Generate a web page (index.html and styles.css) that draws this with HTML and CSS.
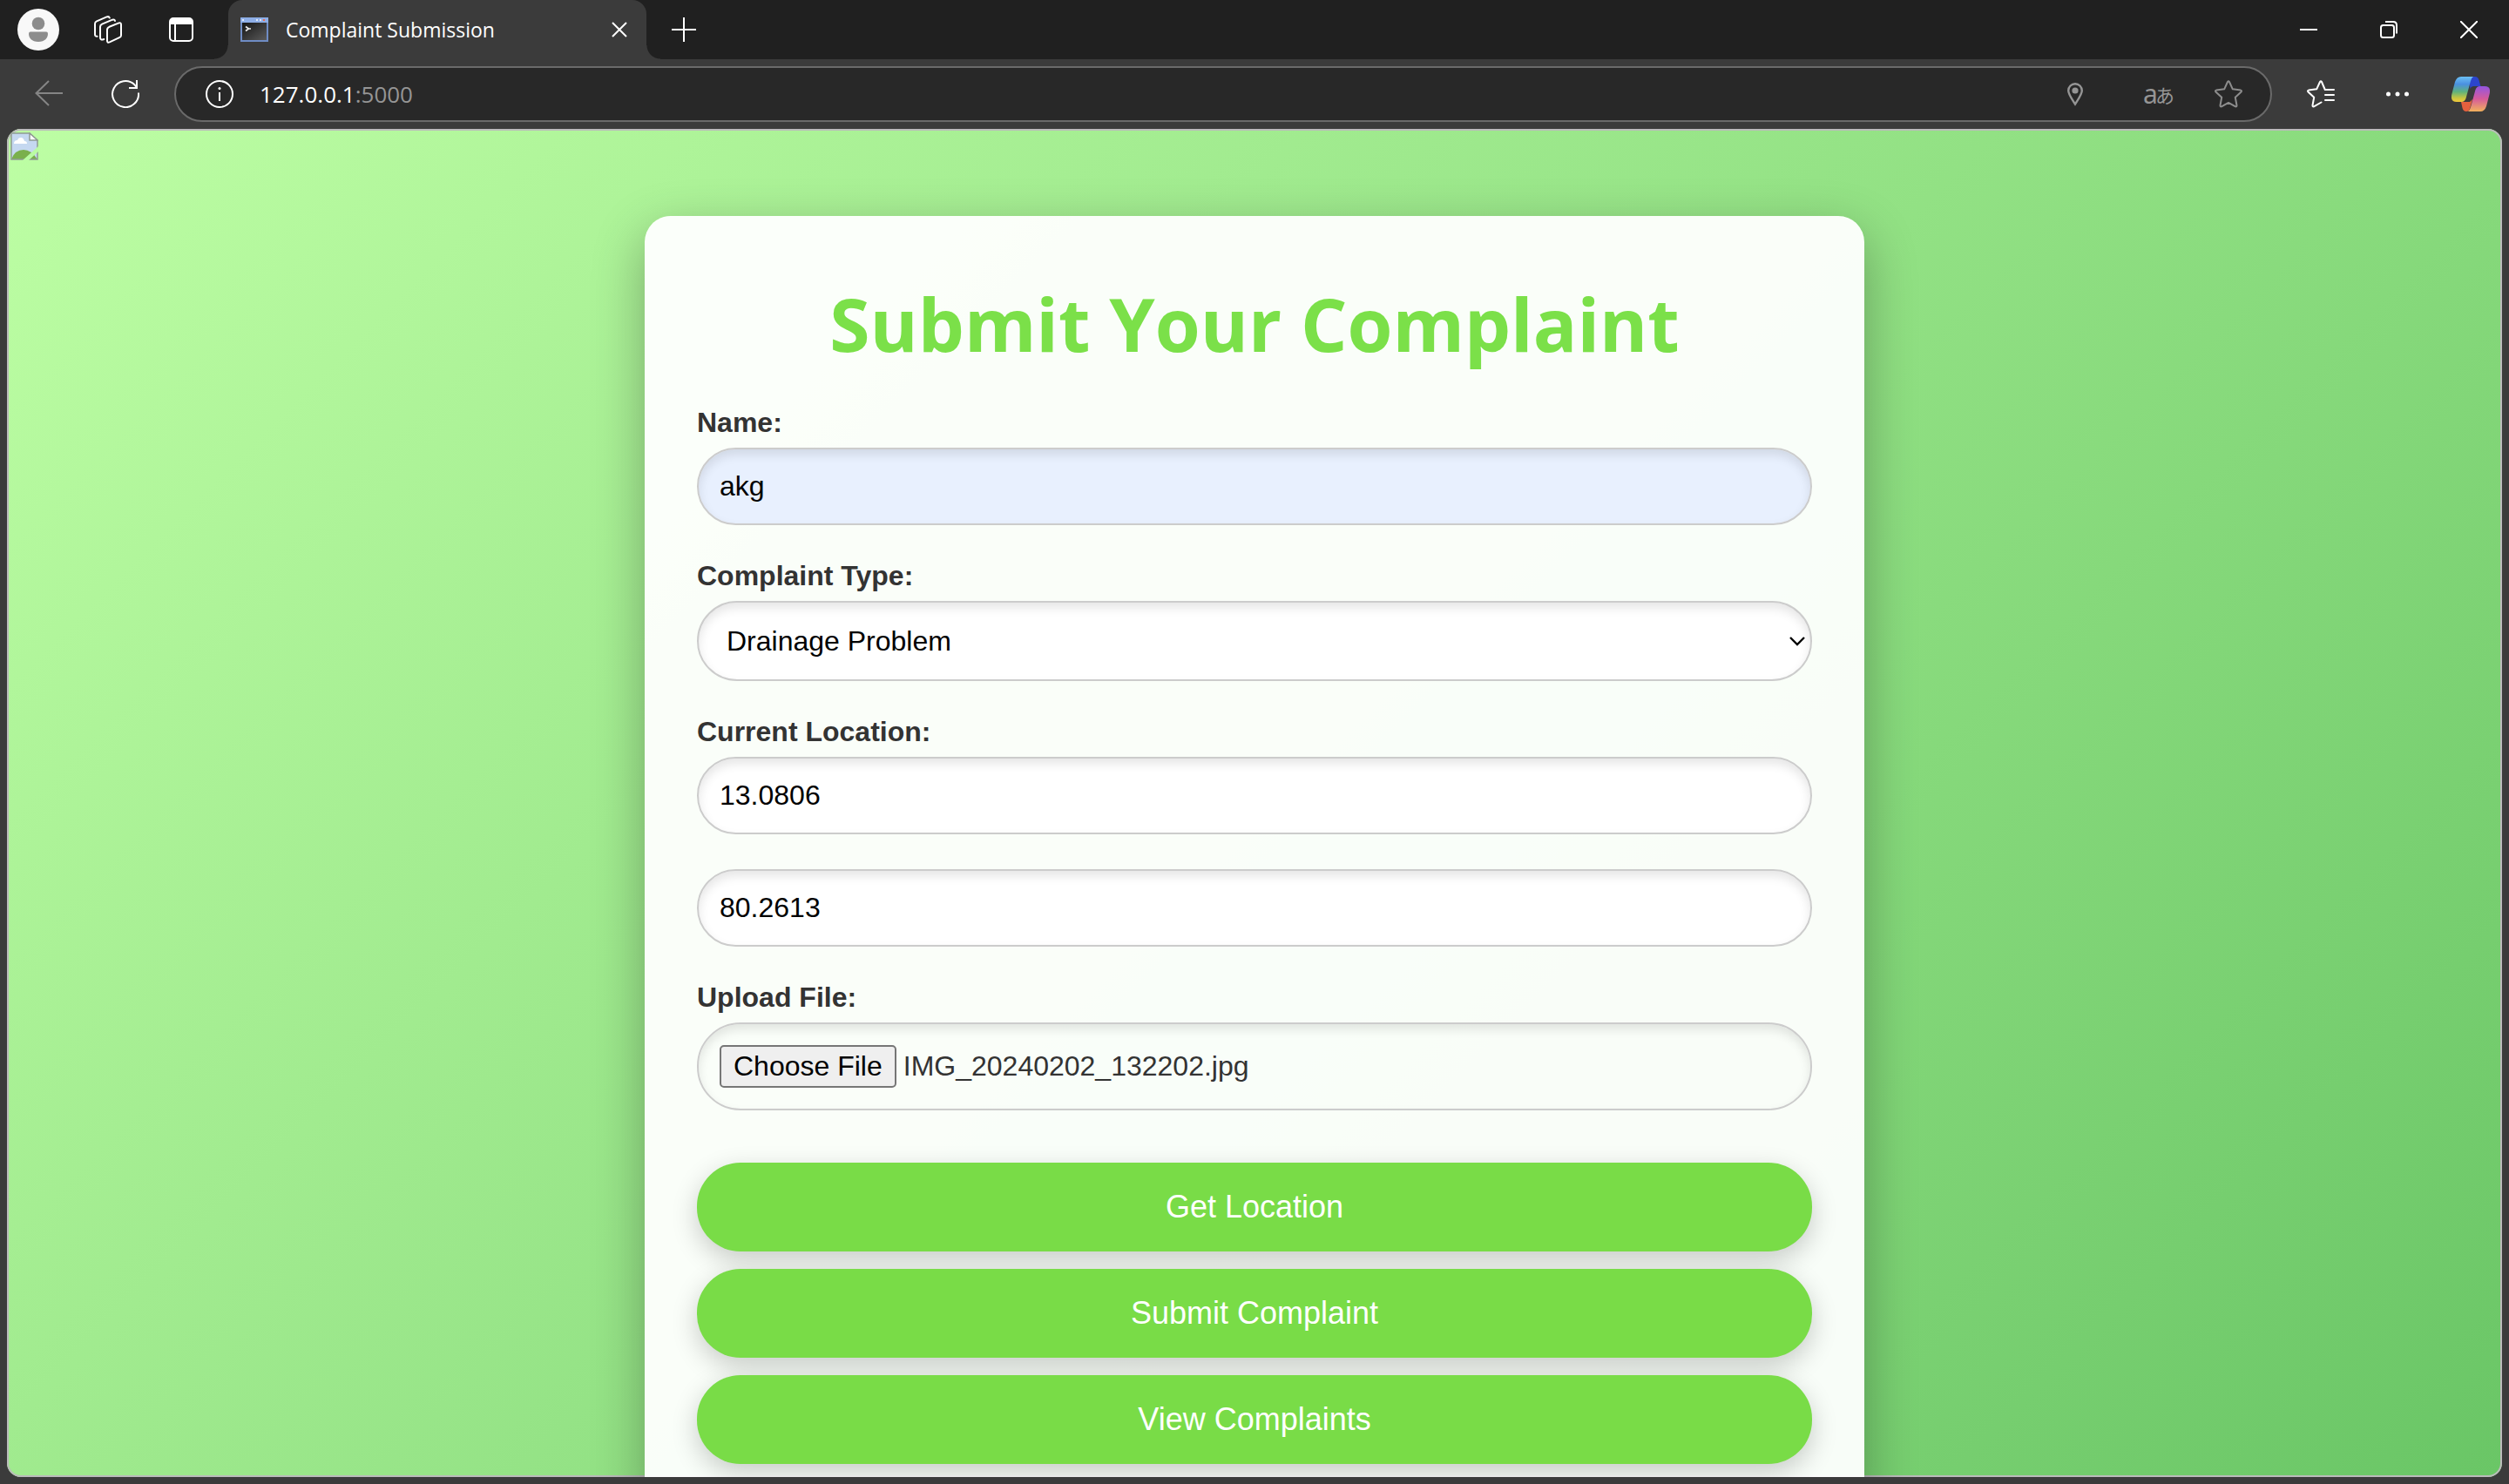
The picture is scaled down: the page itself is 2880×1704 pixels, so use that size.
FILE: index.html
```html
<!DOCTYPE html>
<html lang="en">
<head>
<meta charset="utf-8">
<title>Complaint Submission</title>
<link rel="stylesheet" href="styles.css">
</head>
<body>
<div class="browser">
  <header class="titlebar">
    <div class="titlebar-tools">
      <button class="icon-button" type="button" aria-label="Profile">
        <svg width="48" height="48" viewBox="0 0 48 48"><circle cx="24" cy="24" r="24" fill="#f8f8f8"/><circle cx="24" cy="17" r="7.3" fill="#8c8c8c"/><path d="M15 26.600h18q2 0 2 2.200c0 5-3.500 9.200-11 9.200s-11-4.200-11-9.200q0-2.200 2-2.200z" fill="#8c8c8c"/></svg>
      </button>
      <button class="icon-button" type="button" aria-label="Workspaces">
        <svg width="32" height="32" viewBox="0 0 32 32" fill="none" stroke="#fff" stroke-width="2" stroke-linecap="round" stroke-linejoin="round"><path d="M17.500 12.800 28.500 8.400Q31 7.600 31 10.200V22.500Q31 24.200 29.500 24.900L17.800 30.400Q15 31.500 15 28.800V16.200Q15 13.900 17.500 12.800z"/><path d="M11.300 27Q7 28.800 7 25V12.800Q7 10.500 9.200 9.600L21 4.700Q23.500 4 24 6"/><path d="M3.600 23.800Q1 24 1 21.500V9.300Q1 7.200 3 6.300L14.500 1.400Q17 .5 17.800 2.500"/></svg>
      </button>
      <button class="icon-button" type="button" aria-label="Tab actions">
        <svg width="28" height="28" viewBox="0 0 28 28"><rect x="1" y="1" width="26" height="26" rx="4" fill="none" stroke="#fff" stroke-width="2"/><path d="M1 8V5q0-4 4-4h18q4 0 4 4v3z" fill="#fff"/><path d="M7 8v19" stroke="#fff" stroke-width="2"/></svg>
      </button>
    </div>
    <div class="tab">
      <svg width="32" height="28" viewBox="0 0 32 28"><defs><linearGradient id="term" x1="0" y1="0" x2="1" y2="1"><stop offset="0" stop-color="#151515"/><stop offset="1" stop-color="#5a5a5a"/></linearGradient></defs><path fill="#6f8cc4" d="M0 0h32v28H0z"/><path fill="#8eaee6" d="M0 0h32v6H0z"/><path fill="url(#term)" d="M2 6h28v20H2z"/><path fill="#dfe8f8" d="M2 2h2v2H2zM18 2h2v2h-2zM22 2h2v2h-2z"/><path fill="#e86a50" d="M26 2h2v2h-2z"/><path d="M6 10.500 9.500 13 6 15.500M9 13h3" stroke="#eee" stroke-width="1.600" fill="none"/></svg>
      <span class="tab-title">Complaint Submission</span>
      <button class="icon-button" type="button" aria-label="Close tab">
        <svg width="18" height="18" viewBox="0 0 18 18" stroke="#fff" stroke-width="2"><path d="m1 1 16 16M17 1 1 17"/></svg>
      </button>
    </div>
    <button class="icon-button new-tab" type="button" aria-label="New tab">
      <svg width="28" height="28" viewBox="0 0 28 28" stroke="#fff" stroke-width="2"><path d="M14 0v28M0 14h28"/></svg>
    </button>
    <div class="window-controls">
      <button class="icon-button" type="button" aria-label="Minimize">
        <svg width="20" height="20" viewBox="0 0 20 20"><path d="M0 10h20" stroke="#fff" stroke-width="2"/></svg>
      </button>
      <button class="icon-button" type="button" aria-label="Restore">
        <svg width="20" height="20" viewBox="0 0 20 20" fill="none" stroke="#fff" stroke-width="2"><rect x="1" y="5" width="15" height="14" rx="2.500"/><path d="M6 1h9q4 0 4 4v9.500"/></svg>
      </button>
      <button class="icon-button" type="button" aria-label="Close window">
        <svg width="20" height="20" viewBox="0 0 20 20" stroke="#fff" stroke-width="2"><path d="m0 0 20 20M20 0 0 20"/></svg>
      </button>
    </div>
  </header>

  <nav class="toolbar">
    <button class="icon-button" type="button" aria-label="Back">
      <svg width="32" height="32" viewBox="0 0 32 32" fill="none" stroke="#858585" stroke-width="2"><path d="M32 15H1.500M16 1 1.500 15 16 29"/></svg>
    </button>
    <button class="icon-button" type="button" aria-label="Refresh">
      <svg width="32" height="32" viewBox="0 0 32 32" fill="none" stroke="#fff" stroke-width="2"><path d="M31 14.500A15 15 0 1 1 26.500 5.300L29 8.500"/><path d="M29 0v9H20"/></svg>
    </button>
    <div class="address">
      <svg width="32" height="32" viewBox="0 0 32 32" fill="none" stroke="#fff" stroke-width="2"><circle cx="16" cy="16" r="15"/><path d="M16 14v10"/><circle cx="16" cy="9.500" r="1.500" fill="#fff" stroke="none"/></svg>
      <a class="url" href="#">127.0.0.1<span class="url-port">:5000</span></a>
      <button class="icon-button location" type="button" aria-label="Location">
        <svg width="20" height="28" viewBox="0 0 20 28"><path d="M10 2.200a7.800 7.800 0 0 1 7.800 7.800c0 4.500-5.300 11.500-7.800 15.500C7.500 21.500 2.200 14.500 2.200 10A7.800 7.800 0 0 1 10 2.200z" fill="none" stroke="#959595" stroke-width="2.400"/><circle cx="10" cy="10" r="3.600" fill="#959595"/></svg>
      </button>
      <button class="icon-button translate" type="button" aria-label="Translate">a<span class="kana" lang="ja">あ</span></button>
      <button class="icon-button favorite" type="button" aria-label="Add to favorites">
        <svg width="32" height="32" viewBox="0 0 32 32" fill="none" stroke="#8d8d8d" stroke-width="2" stroke-linejoin="round"><path d="M15 2q1-1.600 2 0l3.800 8.300 9.200 1.300q1.600.5.600 1.800l-6.800 6.400 1.700 9.200q0 1.700-1.500 1.300L16 25.900 8 30.300q-1.500.4-1.500-1.300l1.700-9.200-6.800-6.400q-1-1.300.6-1.800l9.200-1.300z"/></svg>
      </button>
    </div>
    <button class="icon-button" type="button" aria-label="Favorites">
      <svg width="32" height="32" viewBox="0 0 32 32" fill="none" stroke="#fff" stroke-width="2" stroke-linejoin="round" stroke-linecap="round"><path d="M31 11H20.800L17 2q-1-1.600-2 0l-3.800 8.300L2 11.600q-1.600.5-.6 1.800l6.800 6.400L6.500 29q0 1.700 1.500 1.300L16.500 25.500M21 17h10M21 23h10"/></svg>
    </button>
    <button class="icon-button" type="button" aria-label="Settings and more">
      <svg width="26" height="6" viewBox="0 0 26 6" fill="#fff"><circle cx="2.500" cy="3" r="2.500"/><circle cx="13" cy="3" r="2.500"/><circle cx="23.500" cy="3" r="2.500"/></svg>
    </button>
    <button class="icon-button copilot" type="button" aria-label="Copilot">
      <svg width="44" height="40" viewBox="0 0 44 40"><defs><linearGradient id="cl" x1="0" y1="0" x2="0" y2="1"><stop offset="0" stop-color="#6cc0f5"/><stop offset=".3" stop-color="#4a90e0"/><stop offset=".6" stop-color="#5fb27c"/><stop offset=".85" stop-color="#c8c540"/><stop offset="1" stop-color="#f2c93c"/></linearGradient><linearGradient id="cr" x1="0" y1="0" x2="0" y2="1"><stop offset="0" stop-color="#9455e0"/><stop offset=".5" stop-color="#d65b9b"/><stop offset="1" stop-color="#f2b15c"/></linearGradient></defs><path fill="#2c45cc" d="M20 0h7q3.500 0 4.500 4l2 7h-8q-3 0-4 3z"/><path fill="#e5603e" d="M11 29h10l3-3-3 11q-1 3-4 3-3.500 0-4.500-4z"/><path fill="url(#cl)" d="M11 0h14q-2 1-3 5l-5.500 20q-1.500 4-5 4H6q-8 0-5.500-9.500L4 6Q6 0 11 0z"/><path fill="url(#cr)" d="M33 40H19q2-1 3-5l5.500-20q1.500-4 5-4H38q8 0 5.500 9.500L40 34q-2 6-7 6z"/></svg>
    </button>
  </nav>

  <main class="page">
    <svg class="missing-image" width="32" height="32" viewBox="0 0 32 32"><path d="M1 1h21l9 8v22H1z" fill="#c5d8f0"/><path d="M4 13q0-4 4-4 1-3 4-3t4 4q3 0 3 3z" fill="#fff"/><path d="M1 31q4-11 14-11 9 0 16 11z" fill="#7ab04c"/><path d="M1 1h21l9 8v22H1z" fill="none" stroke="#8f9a92" stroke-width="1.500"/><path d="M22 1v8h9z" fill="#fff" stroke="#8f9a92" stroke-width="1.500"/><path d="M14 32 32 16v6L21 32z" fill="#bafba2"/></svg>
    <section class="card">
      <h1>Submit Your Complaint</h1>
      <form class="complaint-form">
        <label for="name">Name:</label>
        <input class="field autofilled" id="name" type="text" value="akg">
        <label for="type">Complaint Type:</label>
        <select class="field" id="type"><option>Drainage Problem</option></select>
        <label for="latitude">Current Location:</label>
        <input class="field" id="latitude" type="text" value="13.0806">
        <input class="field" id="longitude" type="text" value="80.2613" aria-label="Longitude">
        <label for="file">Upload File:</label>
        <input class="field" id="file" type="file">
        <button class="action" type="button">Get Location</button>
        <button class="action" type="submit">Submit Complaint</button>
        <button class="action" type="button">View Complaints</button>
      </form>
    </section>
  </main>
</div>
<script src="script.js"></script>
</body>
</html>
```

FILE: styles.css
```css
* {
  box-sizing: border-box;
}

body {
  margin: 0;
  background: #3b3b3b;
  font-family: "Liberation Sans", Arial, sans-serif;
}

button {
  font-family: inherit;
  border: 0;
}

svg {
  display: block;
  flex: none;
}

.browser {
  display: flex;
  flex-direction: column;
  height: 100vh;
  padding-bottom: 8px;
}

.icon-button {
  display: flex;
  align-items: center;
  justify-content: center;
  padding: 0;
  background: none;
}

/* Title bar */

.titlebar {
  display: flex;
  flex: none;
  height: 68px;
  background: #202020;
}

.titlebar-tools {
  display: grid;
  grid-template-columns: 80px 80px 88px;
  padding-left: 4px;
}

.tab {
  position: relative;
  display: flex;
  align-items: center;
  width: 480px;
  margin-left: 10px;
  padding: 0 22px 0 14px;
  border-radius: 16px 16px 0 0;
  background: #3b3b3b;
}

.tab::before,
.tab::after {
  content: "";
  position: absolute;
  bottom: 0;
  width: 16px;
  height: 16px;
}

.tab::before {
  right: 100%;
  background: radial-gradient(circle at 0 0, #202020 15px, #3b3b3b 16px);
}

.tab::after {
  left: 100%;
  background: radial-gradient(circle at 100% 0, #202020 15px, #3b3b3b 16px);
}

.tab-title {
  flex: 1;
  padding-left: 20px;
  color: #fff;
  font: 23px/32px "Open Sans", "Noto Sans", sans-serif;
}

.new-tab {
  width: 86px;
}

.window-controls {
  display: grid;
  grid-template-columns: repeat(3, 92px);
  margin-left: auto;
}

/* Toolbar */

.toolbar {
  display: flex;
  flex: none;
  height: 80px;
  padding: 8px 4px 8px 12px;
}

.toolbar > .icon-button {
  width: 88px;
}

.toolbar > .copilot {
  width: 80px;
}

.address {
  display: flex;
  flex: 1;
  align-items: center;
  margin: 0 12px;
  padding: 0 32px 0 34px;
  border: 2px solid #6a6a6a;
  border-radius: 32px;
  background: #282828;
}

.url {
  flex: 1;
  padding-left: 30px;
  color: #fff;
  font: 26px/36px "Open Sans", "Noto Sans", sans-serif;
  text-decoration: none;
}

.url-port {
  color: #959595;
}

.translate {
  width: 36px;
  margin: 0 46px 0 68px;
  color: #959595;
  font: 30px/36px "Noto Sans", sans-serif;
}

.kana {
  margin-left: -3px;
  font: 22px/36px "Noto Sans CJK JP", sans-serif;
}

/* Web page */

.page {
  position: relative;
  flex: 1;
  min-height: 0;
  margin: 0 8px;
  padding: 100px 0;
  overflow: hidden;
  border-radius: 16px;
  background: linear-gradient(135deg, #bdfea4, #6ac666);
  box-shadow: inset 0 0 0 2px #bbb;
}

.missing-image {
  position: absolute;
  top: 4px;
  left: 4px;
}

.card {
  width: 1400px;
  max-width: 100%;
  margin: 0 auto;
  padding: 60px;
  border-radius: 30px;
  background: rgba(255, 255, 255, 0.95);
  box-shadow: 0 20px 60px rgba(0, 0, 0, 0.3);
}

h1 {
  margin: 0 0 32px;
  color: #7be049;
  font: bold 84px/127px "Open Sans", "Noto Sans", sans-serif;
  text-align: center;
}

.complaint-form {
  display: flex;
  flex-direction: column;
}

label {
  margin-bottom: 10px;
  color: #333;
  font-size: 32px;
  font-weight: bold;
  line-height: 37px;
}

.field {
  width: 100%;
  margin: 0 0 40px;
  padding: 24px;
  border: 2px solid #ccc;
  border-radius: 50px;
  background-color: #fff;
  box-shadow: inset 0 6px 12px rgba(0, 0, 0, 0.1);
  color: #000;
  font: 32px/37px "Liberation Sans", Arial, sans-serif;
}

input.field[type="text"] {
  height: 89px;
}

input.autofilled {
  background-color: #e8f0fe;
}

select.field {
  height: 92px;
  padding: 0 40px 0 32px;
  appearance: none;
  background-image: url("data:image/svg+xml,%3Csvg xmlns='http://www.w3.org/2000/svg' width='18' height='11'%3E%3Cpath d='m1 1 8 8 8-8' fill='none' stroke='%23000' stroke-width='2.400'/%3E%3C/svg%3E");
  background-repeat: no-repeat;
  background-position: right 6px center;
}

input.field[type="file"] {
  height: 101px;
  background-color: transparent;
  color: #333;
}

.field::file-selector-button {
  height: 49px;
  margin: 0 8px 0 0;
  padding: 0 14px;
  border: 2px solid #767676;
  border-radius: 5px;
  background: #efefef;
  color: #000;
  font: inherit;
}

.action {
  height: 102px;
  margin-top: 20px;
  border-radius: 50px;
  background: #79dc47;
  box-shadow: 0 10px 30px rgba(0, 0, 0, 0.2);
  color: #fff;
  font-size: 36px;
  line-height: 42px;
}
```

FILE: script.js
```js
const picked = new DataTransfer();
picked.items.add(new File([""], "IMG_20240202_132202.jpg", { type: "image/jpeg" }));
document.getElementById("file").files = picked.files;
```
